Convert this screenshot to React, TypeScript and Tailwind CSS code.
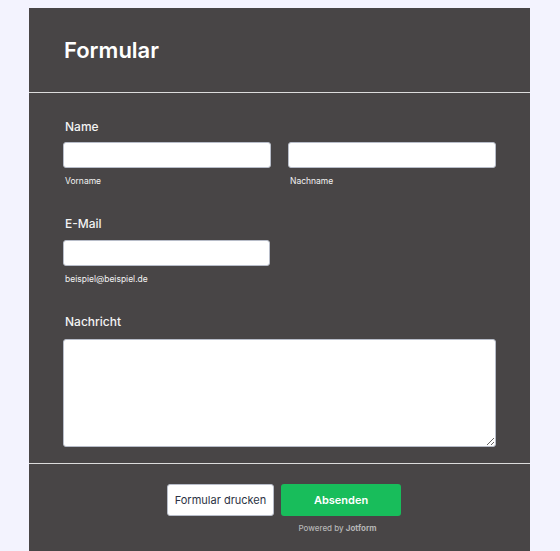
import React from 'react';

const font = { fontFamily: 'Inter, "Noto Sans", sans-serif' };

function Field({ label, children }: { label: string; children: React.ReactNode }) {
  return (
    <div>
      <label className="block text-[12px] leading-4 font-medium text-[#f3f3f3] px-[2px]">{label}</label>
      {children}
    </div>
  );
}

export default function App() {
  const inputCls =
    'block w-full h-[26px] bg-white border border-[#b8bdc9] rounded-[3px] outline-none px-2 text-[12px] text-[#2c3345]';

  return (
    <div className="min-h-[551px] bg-[#f3f3fe] flex pl-[29px] pt-2" style={font}>
      <div className="w-[501px] bg-[#484546] flex flex-col">
        <header className="px-[35px] py-[28px]">
          <h1 className="text-[22px] leading-7 font-semibold text-white">Formular</h1>
        </header>
        <div className="h-px bg-[#dcdcdc]" />

        <form className="px-[34px] pt-[26px] pb-[16px]">
          <Field label="Name">
            <div className="mt-[7px] grid grid-cols-2 gap-[17px]">
              <div>
                <input className={inputCls} />
                <span className="block mt-[7px] text-[8.5px] leading-3 text-[#f3f3f3] px-[2px]">Vorname</span>
              </div>
              <div>
                <input className={inputCls} />
                <span className="block mt-[7px] text-[8.5px] leading-3 text-[#f3f3f3] px-[2px]">Nachname</span>
              </div>
            </div>
          </Field>

          <div className="mt-[29px]">
            <Field label="E-Mail">
              <div className="mt-[8px] w-[207px]">
                <input className={inputCls} />
                <span className="block mt-[7px] text-[8.5px] leading-3 text-[#f3f3f3] px-[2px]">beispiel@beispiel.de</span>
              </div>
            </Field>
          </div>

          <div className="mt-[29px]">
            <Field label="Nachricht">
              <textarea className="mt-[9px] block w-full h-[108px] bg-white border border-[#b8bdc9] rounded-[3px] outline-none p-2 text-[12px]" />
            </Field>
          </div>
        </form>

        <div className="h-px bg-[#dcdcdc]" />

        {/* print button on the left, submit with the branding line under it */}
        <footer className="pt-[20px] flex justify-center items-start gap-[7px] pl-[9px]">
          <button className="h-[32px] w-[107px] bg-white border border-[#b8bdc9] rounded-[3px] text-[11px] text-[#2c3345]">
            Formular drucken
          </button>
          <div className="flex flex-col items-center">
            <button className="h-[32px] w-[120px] bg-[#18bd5b] rounded-[3px] text-[11px] font-semibold text-white">
              Absenden
            </button>
            <p className="mt-[6px] mr-[7px] text-[8px] leading-3 text-[#b5b5b5] font-medium">
              Powered by <span className="font-bold">Jotform</span>
            </p>
          </div>
        </footer>
      </div>
    </div>
  );
}
